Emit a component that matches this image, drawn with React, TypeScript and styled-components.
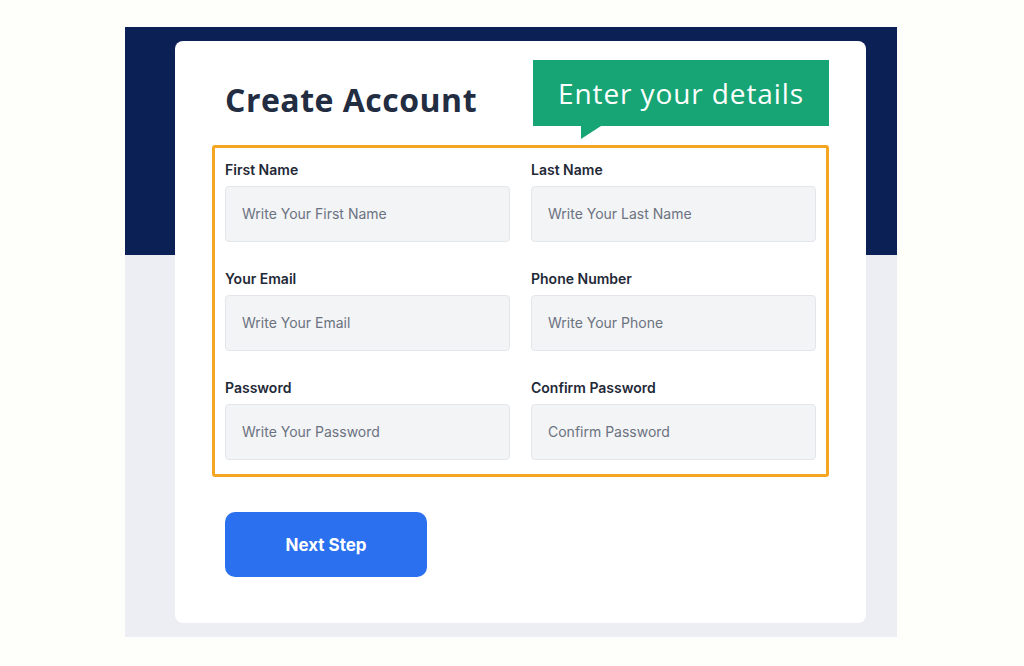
import React from "react";
import styled, { createGlobalStyle } from "styled-components";

const Global = createGlobalStyle`
  html, body { margin: 0; padding: 0; background: #fefefb; }
  body { font-family: Inter, "Noto Sans", sans-serif; }
  * { box-sizing: border-box; }
`;

const Page = styled.div`
  width: 1024px;
  height: 666px;
  padding: 27px 0 0 125px;
`;

const Panel = styled.div`
  width: 772px;
  height: 610px;
  padding: 14px 31px 14px 50px;
  background: linear-gradient(to bottom, #0b2156 0, #0b2156 228px, #eceef3 228px, #eceef3 100%);
`;

const Card = styled.div`
  width: 691px;
  height: 582px;
  background: #ffffff;
  border-radius: 8px;
  padding: 19px 37px 0 37px;
  display: flex;
  flex-direction: column;
`;

const Header = styled.div`
  display: flex;
  justify-content: space-between;
  align-items: flex-start;
  margin-bottom: 19px;
`;

const Title = styled.h1`
  margin: 21px 0 0 13px;
  font-family: "Open Sans", sans-serif;
  font-weight: 700;
  font-size: 32px;
  line-height: 1.2;
  color: #232d42;
  letter-spacing: 0.5px;
`;

const Banner = styled.div`
  position: relative;
  width: 296px;
  height: 66px;
  background: #17a575;
  color: #ffffff;
  font-family: "Open Sans", sans-serif;
  font-weight: 500;
  font-size: 28px;
  display: flex;
  align-items: center;
  justify-content: center;
  letter-spacing: 0.9px;
  &::after {
    content: "";
    position: absolute;
    left: 48px;
    top: 66px;
    width: 0;
    height: 0;
    border-top: 13px solid #17a575;
    border-right: 20px solid transparent;
  }
`;

const FormBox = styled.div`
  border: 3px solid #f4a623;
  border-radius: 3px;
  padding: 13px 10px 14px 10px;
  display: grid;
  grid-template-columns: 285px 285px;
  column-gap: 21px;
  row-gap: 28px;
`;

const Field = styled.div`
  display: flex;
  flex-direction: column;
  gap: 8px;
`;

const Label = styled.label`
  font-size: 14px;
  line-height: 17px;
  font-weight: 600;
  color: #1f2937;
`;

const Input = styled.input`
  height: 56px;
  width: 100%;
  border: 1px solid #e3e6ea;
  background: #f3f4f6;
  border-radius: 4px;
  padding: 0 16px 2px 16px;
  font-family: Inter, sans-serif;
  font-size: 14px;
  color: #1f2937;
  outline: none;
  &::placeholder { color: #6b7280; }
`;

const Button = styled.button`
  margin: 35px 0 0 13px;
  width: 202px;
  height: 65px;
  border: none;
  border-radius: 10px;
  background: #2b70ef;
  color: #ffffff;
  font-family: Inter, sans-serif;
  font-weight: 700;
  font-size: 17px;
  cursor: pointer;
`;

const fields = [
  { label: "First Name", placeholder: "Write Your First Name", type: "text" },
  { label: "Last Name", placeholder: "Write Your Last Name", type: "text" },
  { label: "Your Email", placeholder: "Write Your Email", type: "email" },
  { label: "Phone Number", placeholder: "Write Your Phone", type: "tel" },
  { label: "Password", placeholder: "Write Your Password", type: "password" },
  { label: "Confirm Password", placeholder: "Confirm Password", type: "password" },
];

export default function App() {
  return (
    <>
      <Global />
      <Page>
        <Panel>
          <Card>
            <Header>
              <Title>Create Account</Title>
              <Banner>Enter your details</Banner>
            </Header>
            <FormBox>
              {fields.map((f) => (
                <Field key={f.label}>
                  <Label>{f.label}</Label>
                  <Input type={f.type} placeholder={f.placeholder} />
                </Field>
              ))}
            </FormBox>
            <div>
              <Button>Next Step</Button>
            </div>
          </Card>
        </Panel>
      </Page>
    </>
  );
}
